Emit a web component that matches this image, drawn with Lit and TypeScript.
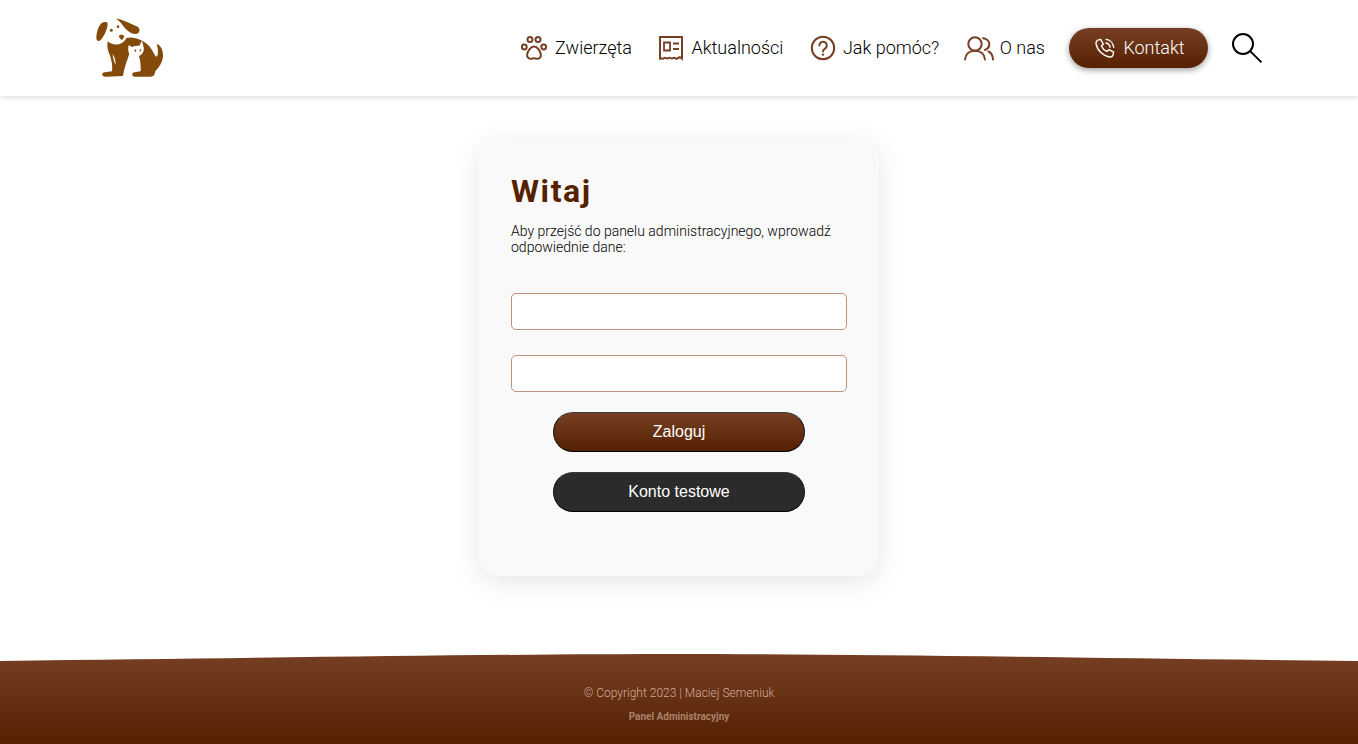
import { LitElement, html, css, svg } from "lit";
import { customElement } from "lit/decorators.js";

const logo = svg`<svg class="logo" viewBox="0 0 228 204" aria-hidden="true">
  <g fill="#844a0a">
    <path d="M37 24C25 25 14 45 13 72C13 80 20 84 26 78C38 66 48 40 47 28C45 24 41 23 37 24Z"/>
    <path d="M72 14C90 15 120 30 137 38C146 44 144 60 130 60C115 60 100 46 92 34C86 25 80 19 72 14Z"/>
    <path d="M47 82C60 95 90 98 103 72C125 66 160 78 178 105C186 118 190 128 194 128C200 122 198 102 194 90C206 93 214 110 213 126C212 146 200 160 190 172C188 184 184 188 176 188L128 188C118 188 118 176 128 175L146 172C146 155 146 140 140 124L112 118C108 135 98 155 93 186L40 188C28 188 28 176 38 175L60 172C63 150 56 130 50 115C46 105 45 92 47 82Z"/>
  </g>
  <path fill="#fff" d="M62 120C68 130 72 142 70 152C66 142 62 130 62 120Z"/>
  <path fill="#fff" d="M110 93L120 99C127 95 136 95 142 95L150 80L155 100C158 112 150 122 142 126L112 120C108 112 108 102 110 93Z"/>
  <g fill="#844a0a">
    <ellipse cx="130" cy="110" rx="2.6" ry="3.2"/>
    <ellipse cx="145" cy="109" rx="2.6" ry="3.2"/>
    <circle cx="58" cy="49" r="4.5"/>
    <circle cx="78" cy="38" r="4"/>
    <path d="M81 66C83 61 93 61 96 66C97 71 93 76 88 78C86 74 80 71 81 66Z"/>
  </g>
</svg>`;

const paw = svg`<svg class="ic" style="width:28px;height:26px" viewBox="-1 -1 28 26" fill="none" stroke="#763f24" stroke-width="2">
  <circle cx="3.3" cy="11" r="2.4"/><circle cx="9" cy="3.6" r="2.5"/><circle cx="17" cy="3.6" r="2.5"/><circle cx="22.7" cy="11" r="2.4"/>
  <path d="M13 10.5C9.5 10.5 7 15 6.2 18C5.5 21.5 8.5 23.5 11 22.6C12.5 22.1 13.5 22.1 15 22.6C17.5 23.5 20.5 21.5 19.8 18C19 15 16.5 10.5 13 10.5Z"/>
</svg>`;

const news = svg`<svg class="ic" style="width:28px;height:26px" viewBox="-3 -1 28 26" fill="none" stroke="#763f24" stroke-width="2">
  <path d="M1 1H23V22.5C21.5 21 20 21 18.5 22.5C17 23.5 15.5 21 14 22C12.5 23.5 11 21 9.5 22C8 23.5 6.5 21 5 22C3.5 23.5 2 22 1 22.5Z"/>
  <path stroke-width="1.8" d="M5 6.5H11V14.5H5Z M14 7.5H20 M14 13H20"/>
</svg>`;

const help = svg`<svg class="ic" style="width:28px;height:26px" viewBox="-3 -1 28 26" fill="none" stroke="#763f24" stroke-width="2">
  <circle cx="12" cy="12" r="11.2"/>
  <path stroke-linecap="round" d="M8.4 9.4A3.7 3.7 0 1 1 14 12.6C12.7 13.4 12 14 12 15.4"/>
  <circle cx="12" cy="18.6" r="1.2" fill="#763f24" stroke="none"/>
</svg>`;

const users = svg`<svg class="ic" style="width:30px;height:24px" viewBox="-1 0 30 24" fill="none" stroke="#763f24" stroke-width="2" stroke-linecap="round" overflow="visible">
  <circle cx="11" cy="8" r="6.7"/>
  <path d="M1 23.5C1.5 18 5.5 14.8 11 14.8C16.5 14.8 20.5 18 21 23.5"/>
  <path d="M19 2.2C22.5 2.5 25.5 5 25.3 8.4C25.2 11 23.5 13 21 14"/>
  <path d="M24.5 15.5C27 16.5 28.8 20 29 23.5"/>
</svg>`;

const phone = svg`<svg class="ph" viewBox="0 0 20 20" fill="none" stroke="#fff" stroke-width="1.4" stroke-linejoin="round" stroke-linecap="round">
  <path d="M2.8 2.2L5.6 1.3L8.3 6L6.5 8C7.5 10.5 9.5 12.5 12 13.6L14 11.6L18.6 14.2L18 17C17.5 18.6 16 19.2 14.4 19C8 18 2 12 1 5.6C0.9 4 1.5 2.8 2.8 2.2Z"/>
  <path d="M11 5C13 5.3 14.7 7 15 9.2"/>
  <path d="M11 1.4C15 1.8 18.2 5 18.7 9.2"/>
</svg>`;

const search = svg`<svg class="search" viewBox="0 0 30 30" fill="none" stroke="#000" stroke-width="2">
  <circle cx="11" cy="11" r="10"/><path d="M18.4 18.4L29.5 29.3"/>
</svg>`;

@customElement("app-root")
export class AppRoot extends LitElement {
  static styles = css`
    :host {
      display: flex;
      flex-direction: column;
      min-height: 100vh;
      background: #fff;
      font-family: Roboto, "Liberation Sans", sans-serif;
      color: #000;
    }
    header {
      height: 96px;
      box-sizing: border-box;
      padding: 0 96px 0 92px;
      display: flex;
      align-items: center;
      justify-content: space-between;
      background: #fff;
      box-shadow: 0 1px 6px rgba(0, 0, 0, 0.16);
    }
    .logo { width: 76px; height: 68px; display: block; }
    nav { display: flex; align-items: center; gap: 24.5px; margin-top: -1px; }
    .item {
      display: flex;
      align-items: center;
      gap: 7px;
      font-size: 18px;
      font-weight: 300;
      color: #000;
    }
    .us { margin-left: -1px; }
    .ic { display: block; flex: none; }
    .cta {
      display: flex;
      align-items: center;
      justify-content: center;
      gap: 8px;
      width: 139px;
      height: 40px;
      margin-left: -1px;
      padding-left: 4px;
      box-sizing: border-box;
      border-radius: 20px;
      color: #fff;
      font-size: 18px;
      font-weight: 300;
      background: linear-gradient(#763f24, #552100);
      box-shadow: 0 2px 6px rgba(0, 0, 0, 0.4);
    }
    .ph { width: 20px; height: 20px; display: block; }
    .search { width: 30px; height: 30px; display: block; }
    main {
      flex: 1;
      display: flex;
      justify-content: center;
      align-items: flex-start;
      padding-top: 43px;
    }
    .card {
      width: 400px;
      height: 437px;
      box-sizing: border-box;
      padding: 33px 32px 32px;
      border-radius: 20px;
      background: #f9f9f9;
      box-shadow: 0 6px 28px rgba(0, 0, 0, 0.1);
      display: flex;
      flex-direction: column;
    }
    h1 {
      margin: 0;
      font-size: 32px;
      line-height: 38px;
      font-weight: 700;
      letter-spacing: 1.6px;
      color: #552100;
    }
    p {
      margin: 13px 0 0;
      font-size: 14px;
      line-height: 16px;
      font-weight: 300;
      color: #000;
    }
    .field {
      display: block;
      box-sizing: border-box;
      width: 336px;
      height: 37px;
      padding: 0 8px;
      background: #fff;
      border: 1px solid #bf917b;
      border-radius: 5px;
      outline: none;
    }
    .f1 { margin-top: 38px; }
    .f2 { margin-top: 25px; }
    button {
      display: block;
      box-sizing: border-box;
      width: 252px;
      height: 40px;
      align-self: center;
      border-radius: 20px;
      border: 1px solid;
      border-color: #3a3a3a #111 #000;
      color: #fff;
      font-family: "Liberation Sans", Arial, sans-serif;
      font-size: 16px;
      padding: 0;
    }
    .login { margin-top: 20px; background: linear-gradient(#763f24, #552100); }
    .test { margin-top: 20px; background: #2b2b2b; }
    footer {
      height: 90px;
      box-sizing: border-box;
      padding-top: 32px;
      text-align: center;
      background: linear-gradient(#763f24, #552100);
      clip-path: path("M0 7C300 3.6 500 0 679 0C858 0 1058 3.6 1358 7V90H0Z");
    }
    .copy {
      font-size: 12px;
      line-height: 14px;
      font-weight: 300;
      color: #cfad9c;
    }
    .admin {
      margin-top: 11px;
      font-size: 10px;
      line-height: 12px;
      font-weight: 700;
      color: #a9826e;
    }
  `;

  render() {
    return html`
      <header>
        ${logo}
        <nav>
          <div class="item">${paw}<span>Zwierzęta</span></div>
          <div class="item">${news}<span>Aktualności</span></div>
          <div class="item">${help}<span>Jak pomóc?</span></div>
          <div class="item us">${users}<span>O nas</span></div>
          <div class="cta">${phone}<span>Kontakt</span></div>
          ${search}
        </nav>
      </header>
      <main>
        <section class="card">
          <h1>Witaj</h1>
          <p>Aby przejść do panelu administracyjnego, wprowadź odpowiednie dane:</p>
          <input class="field f1" type="text" />
          <input class="field f2" type="password" />
          <button class="login">Zaloguj</button>
          <button class="test">Konto testowe</button>
        </section>
      </main>
      <footer>
        <div class="copy">© Copyright 2023 | Maciej Semeniuk</div>
        <div class="admin">Panel Administracyjny</div>
      </footer>
    `;
  }
}
